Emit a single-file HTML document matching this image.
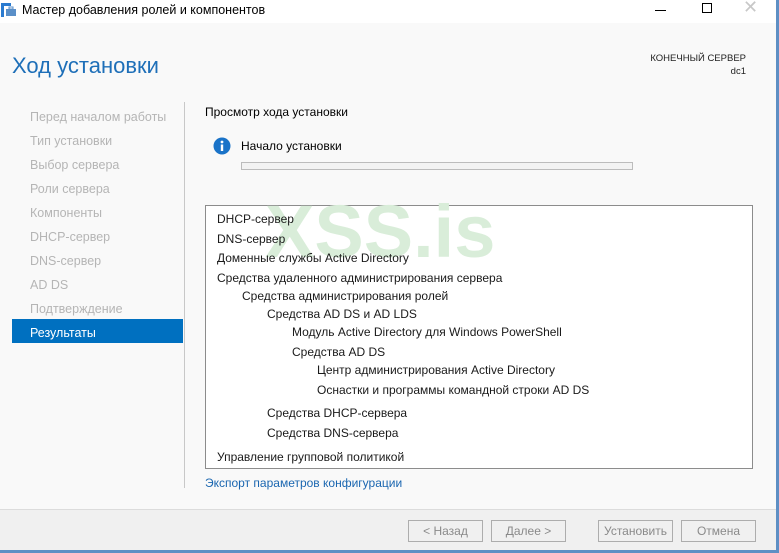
<!DOCTYPE html>
<html><head><meta charset="utf-8"><style>
*{margin:0;padding:0;box-sizing:border-box}
body{width:779px;height:553px;position:relative;overflow:hidden;background:#f9f9f9;font-family:"Segoe UI","Liberation Sans","DejaVu Sans",sans-serif;font-size:12px;color:#000}
.a{position:absolute;white-space:nowrap}
#tb{left:0;top:0;width:779px;height:23px;background:#fff}
.nav{left:30px;color:#b5b5b5;font-size:12.5px}
.l{font-size:12px;color:#1a1a1a}
.btn{position:absolute;top:520px;height:22px;border:1px solid #adadad;background:#f0f0f0;color:#8a8a8a;text-align:center;line-height:21px;font-size:12px}
</style></head><body>
<div class="a" id="tb"></div>
<svg class="a" style="left:1px;top:2px" width="16" height="16" viewBox="0 0 16 16"><rect x="0" y="1" width="3" height="14" fill="#2b7bd0"/><rect x="0" y="1" width="10" height="3" fill="#2b7bd0"/><rect x="5" y="7" width="10" height="7" fill="#5a8fc8"/><rect x="8" y="5" width="4" height="2" fill="none" stroke="#5a8fc8"/></svg>
<div class="a" style="left:22px;top:3px;font-size:12.5px">Мастер добавления ролей и компонентов</div>
<div class="a" style="left:655px;top:10px;width:11px;height:1px;background:#000"></div>
<div class="a" style="left:702px;top:3px;width:10px;height:10px;border:1px solid #000"></div>
<div class="a" style="left:743px;top:-3px;font-size:18px;color:#c8c8c8">✕</div>
<div class="a" style="left:776px;top:0;width:3px;height:553px;background:#5e8fc4"></div>
<div class="a" style="left:0;top:550px;width:779px;height:3px;background:#5e8fc4"></div>
<div class="a" style="left:12px;top:53px;font-size:22px;color:#1e6fb8;font-weight:300">Ход установки</div>
<div class="a" style="left:600px;top:52px;width:146px;text-align:right;font-size:9.5px;line-height:13px;color:#222">КОНЕЧНЫЙ СЕРВЕР<br>dc1</div>
<div class="a nav" style="top:110px">Перед началом работы</div>
<div class="a nav" style="top:134px">Тип установки</div>
<div class="a nav" style="top:158px">Выбор сервера</div>
<div class="a nav" style="top:182px">Роли сервера</div>
<div class="a nav" style="top:206px">Компоненты</div>
<div class="a nav" style="top:230px">DHCP-сервер</div>
<div class="a nav" style="top:254px">DNS-сервер</div>
<div class="a nav" style="top:278px">AD DS</div>
<div class="a nav" style="top:302px">Подтверждение</div>
<div class="a" style="left:12px;top:319px;width:171px;height:24px;background:#0070c0"></div>
<div class="a nav" style="top:326px;color:#fff">Результаты</div>
<div class="a" style="left:184px;top:102px;width:1px;height:386px;background:#c8c8c8"></div>
<div class="a" style="left:205px;top:105px;font-size:12px">Просмотр хода установки</div>
<svg class="a" style="left:213px;top:137px" width="18" height="18" viewBox="0 0 18 18"><circle cx="9" cy="9" r="8.5" fill="#1a73c8"/><rect x="7.8" y="7.5" width="2.4" height="6.5" fill="#fff"/><circle cx="9" cy="5" r="1.4" fill="#fff"/></svg>
<div class="a" style="left:241px;top:139px;font-size:12px">Начало установки</div>
<div class="a" style="left:241px;top:162px;width:392px;height:8px;border:1px solid #bcbcbc;background:#f3f3f3"></div>
<div class="a" style="left:205px;top:205px;width:548px;height:264px;border:1px solid #8c8c8c;background:#fff"></div>
<div class="a" style="left:265px;top:189px;font-size:74px;font-weight:bold;color:#d9edd9;font-family:'Liberation Sans',sans-serif">XSS.is</div>
<div class="a l" style="left:217px;top:212px">DHCP-сервер</div>
<div class="a l" style="left:217px;top:232px">DNS-сервер</div>
<div class="a l" style="left:217px;top:251px">Доменные службы Active Directory</div>
<div class="a l" style="left:217px;top:271px">Средства удаленного администрирования сервера</div>
<div class="a l" style="left:242px;top:289px">Средства администрирования ролей</div>
<div class="a l" style="left:267px;top:307px">Средства AD DS и AD LDS</div>
<div class="a l" style="left:292px;top:325px">Модуль Active Directory для Windows PowerShell</div>
<div class="a l" style="left:292px;top:345px">Средства AD DS</div>
<div class="a l" style="left:317px;top:363px">Центр администрирования Active Directory</div>
<div class="a l" style="left:317px;top:383px">Оснастки и программы командной строки AD DS</div>
<div class="a l" style="left:267px;top:406px">Средства DHCP-сервера</div>
<div class="a l" style="left:267px;top:426px">Средства DNS-сервера</div>
<div class="a l" style="left:217px;top:450px">Управление групповой политикой</div>
<div class="a" style="left:205px;top:476px;color:#1a66b0">Экспорт параметров конфигурации</div>
<div class="a" style="left:0;top:509px;width:776px;height:41px;background:#f0f0f0;border-top:1px solid #dcdcdc"></div>
<div class="btn" style="left:408px;width:75px">&lt; Назад</div>
<div class="btn" style="left:491px;width:75px">Далее &gt;</div>
<div class="btn" style="left:598px;width:75px">Установить</div>
<div class="btn" style="left:681px;width:75px">Отмена</div>
</body></html>
